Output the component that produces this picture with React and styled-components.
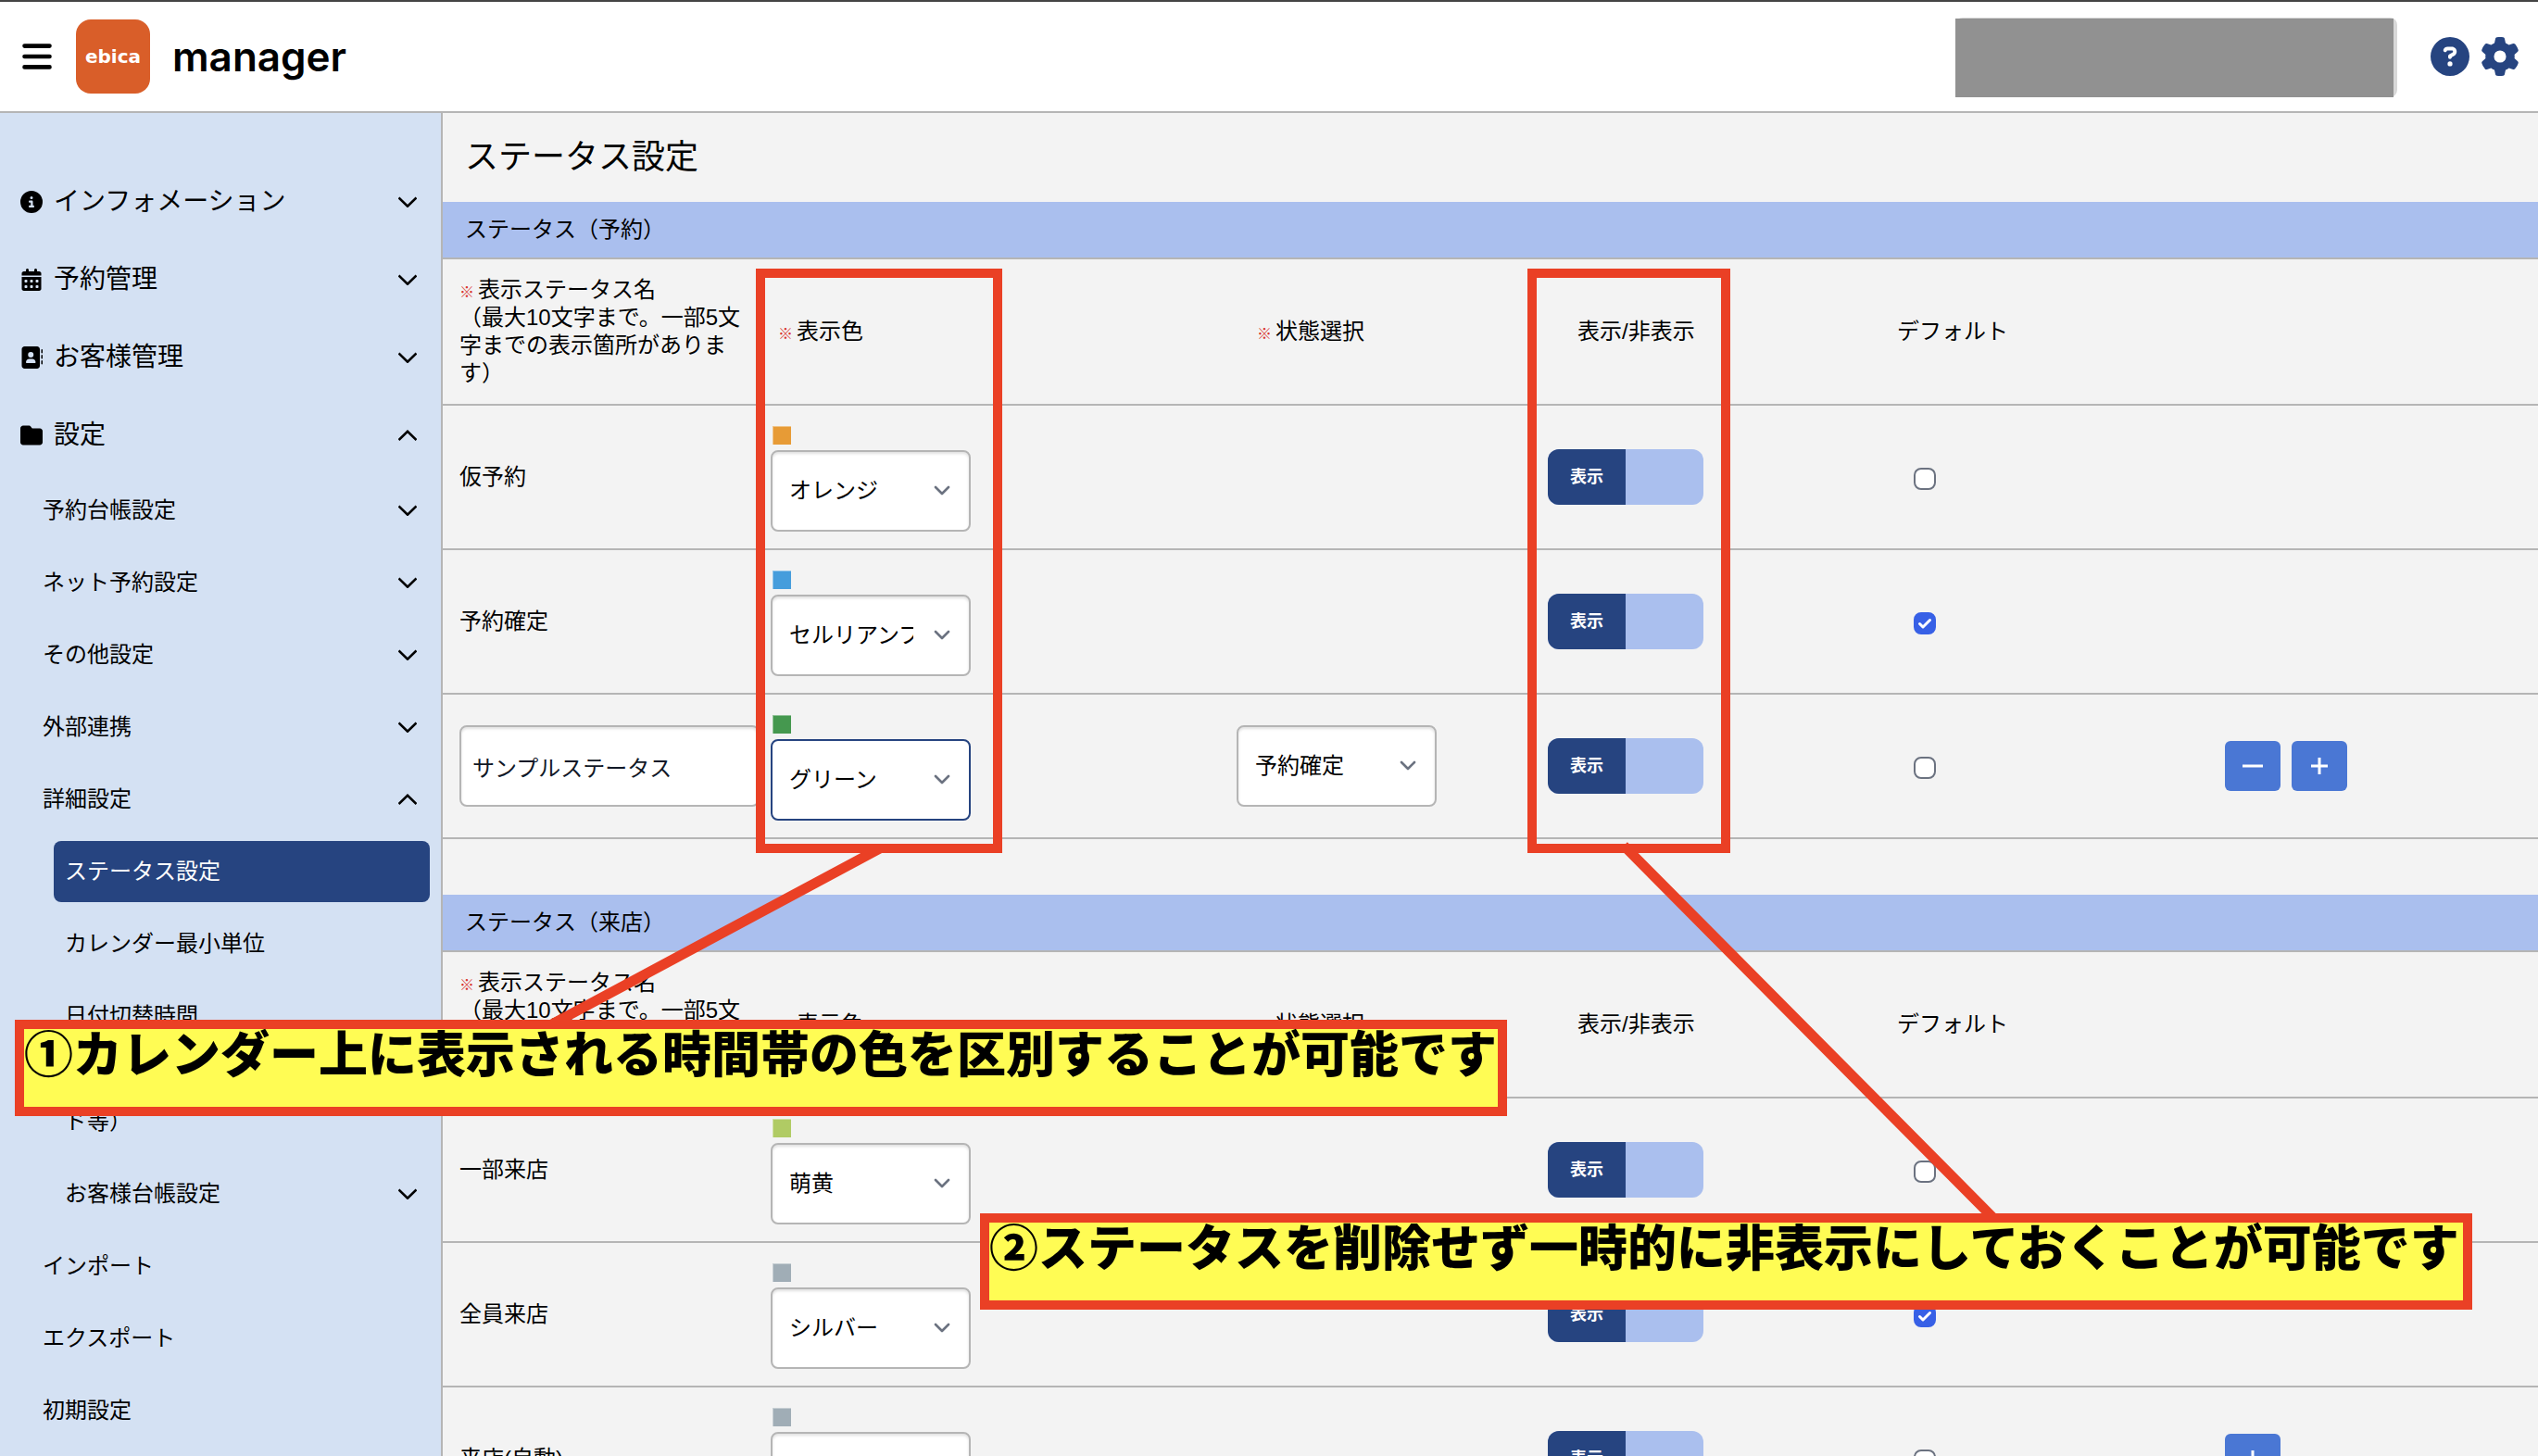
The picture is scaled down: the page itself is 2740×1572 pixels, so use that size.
import React, { useState } from "react";
import styled, { createGlobalStyle } from "styled-components";
import {
  FaAddressBook,
  FaCalendarDays,
  FaCircleInfo,
  FaCircleQuestion,
  FaFolder,
  FaGear,
} from "react-icons/fa6";

const color = {
  navy: "#264480",
  blue: "#4a77d4",
  band: "#aabfee",
  side: "#d4e1f3",
  page: "#f3f3f3",
  line: "#b5b5b5",
  red: "#ea4025",
  yellow: "#fffc54",
};

const GlobalStyle = createGlobalStyle`
  *, *::before, *::after { box-sizing: border-box; }
  body { margin: 0; background: ${color.page}; }
  body, button, input, select {
    font-family: "Liberation Sans", "Noto Sans CJK JP", sans-serif;
    font-size: 24px;
    line-height: 30px;
    color: #000;
  }
  button { border: 0; padding: 0; background: none; cursor: pointer; }
  a { color: inherit; text-decoration: none; }
  svg { display: block; flex: none; }
`;

const Screen = styled.div`
  position: relative;
  display: flex;
  flex-direction: column;
  height: 100vh;
  overflow: hidden;
`;

/* ---------- header ---------- */

const Header = styled.header`
  display: flex;
  align-items: center;
  flex: none;
  height: 122px;
  padding: 0 20px 0 24px;
  background: #fff;
  border-top: 2px solid #444;
  border-bottom: 2px solid ${color.line};
`;

const Logo = styled.span`
  display: grid;
  place-items: center;
  width: 80px;
  height: 80px;
  margin-left: 26px;
  border-radius: 16px;
  background: #d95e29;
  color: #fff;
  font: bold 20px/24px "DejaVu Sans", sans-serif;
`;

const Brand = styled.span`
  margin-left: 24px;
  font: 600 44px/56px Inter, sans-serif;
`;

const Account = styled.div`
  width: 477px;
  height: 86px;
  margin: 2px 0 0 auto;
  padding: 1px 4px 0 0;
  border-radius: 8px;
  background: #d8d8d8;
`;

const AccountMask = styled.div`
  height: 85px;
  background: #919191;
`;

const HeaderActions = styled.div`
  display: flex;
  gap: 12px;
  margin-left: 36px;
  color: ${color.navy};

  button { color: inherit; }
  svg { width: 42px; height: 42px; }
`;

/* ---------- side menu ---------- */

const Body = styled.div`
  display: flex;
  flex: 1;
  min-height: 0;
`;

const Side = styled.nav`
  display: flex;
  flex-direction: column;
  flex: none;
  width: 478px;
  padding-top: 54px;
  overflow: hidden;
  background: ${color.side};
  border-right: 2px solid ${color.line};
`;

const Group = styled.button`
  display: flex;
  align-items: center;
  flex: none;
  width: 100%;
  height: ${(p) => (p.$top ? 84 : 78)}px;
  padding: 0 26px 0 ${(p) => p.$indent}px;
  font-size: ${(p) => (p.$top ? 28 : 24)}px;
  text-align: left;

  > svg:first-child { width: 24px; height: 24px; margin-right: 12px; }
  > span { flex: 1; }
`;

const Leaf = styled.a`
  flex: none;
  margin: 6px 12px 6px ${(p) => (p.$deep ? 58 : 34)}px;
  padding: 15px 12px;
  border-radius: 8px;
  line-height: 36px;
  color: ${(p) => (p.$active ? "#fff" : "#000")};
  background: ${(p) => (p.$active ? color.navy : "transparent")};
`;

/* ---------- main ---------- */

const Main = styled.main`
  flex: 1;
  min-width: 0;
  overflow: hidden;
`;

const Title = styled.h1`
  margin: 0;
  padding: 21px 24px;
  font-size: 36px;
  font-weight: 400;
  line-height: 54px;
`;

const Section = styled.section`
  margin-bottom: 60px;
`;

const Band = styled.h2`
  margin: 0;
  padding: 15px 24px;
  font-size: 24px;
  font-weight: 400;
  line-height: 30px;
  background: ${color.band};
  border-bottom: 2px solid ${color.line};
`;

const Table = styled.table`
  width: 100%;
  table-layout: fixed;
  border-collapse: separate;
  border-spacing: 0;
`;

const HeadCell = styled.th`
  height: 158px;
  padding: 0 12px 0 ${(p) => p.$indent}px;
  border-bottom: 2px solid ${color.line};
  font-weight: 400;
  text-align: left;
`;

const Cell = styled.td`
  height: 156px;
  padding: 0 6px 0 ${(p) => p.$indent || 6}px;
  border-bottom: 2px solid ${color.line};
`;

const ColorCell = styled(Cell)`
  padding: 22px 6px 18px;
`;

const Required = styled.span`
  margin-right: 4px;
  color: #d9362f;
  font-size: 16px;
  line-height: 16px;
`;

const Swatch = styled.div`
  width: 20px;
  height: 20px;
  margin: 0 0 6px 2px;
  border: solid rgba(255, 255, 255, 0.4);
  border-width: 1px 0 0 1px;
  background: ${(p) => p.$color};
`;

const SelectBox = styled.div`
  position: relative;
  width: 216px;
  height: 88px;

  > svg {
    position: absolute;
    right: 22px;
    top: 38px;
    pointer-events: none;
  }
`;

const Select = styled.select`
  appearance: none;
  width: 100%;
  height: 100%;
  padding: 0 60px 0 18px;
  border: 2px solid ${(p) => (p.$focused ? color.navy : color.line)};
  border-radius: 8px;
  outline: 0;
  background: #fff;
  box-shadow: ${(p) => (p.$focused ? "none" : "inset 0 2px 3px rgba(0, 0, 0, 0.12)")};
`;

const TextBox = styled.input`
  display: block;
  width: 100%;
  height: 88px;
  padding: 0 12px;
  border: 2px solid ${color.line};
  border-radius: 8px;
  outline: 0;
  background: #fff;
  box-shadow: inset 0 2px 3px rgba(0, 0, 0, 0.12);
  color: #111827;
`;

const Switch = styled.button`
  display: flex;
  justify-content: ${(p) => (p.$on ? "flex-start" : "flex-end")};
  width: 168px;
  height: 60px;
  border-radius: 12px;
  overflow: hidden;
  background: ${color.band};

  > span {
    width: 84px;
    background: ${color.navy};
    color: #fff;
    font-size: 18px;
    font-weight: 700;
    line-height: 60px;
  }
`;

const Tick = styled.label`
  display: grid;
  width: 24px;
  height: 24px;
  margin-top: 4px;

  > * { grid-area: 1 / 1; }
  > svg { pointer-events: none; }
`;

const TickInput = styled.input`
  appearance: none;
  width: 24px;
  height: 24px;
  margin: 0;
  border: 2px solid #6b7280;
  border-radius: 8px;
  background: #fff;

  &:checked {
    border-color: #3760e6;
    background: #3760e6;
  }
`;

const Actions = styled.div`
  display: flex;
  gap: 12px;
`;

const ActionButton = styled.button`
  display: grid;
  place-items: center;
  width: 60px;
  height: 54px;
  border-radius: 6px;
  background: ${color.blue};
`;

/* ---------- annotations laid over the screen ---------- */

const Overlay = styled.div`
  position: absolute;
  inset: 0;
  pointer-events: none;
`;

const Lines = styled.svg`
  position: absolute;
  left: 0;
  top: 0;
`;

const Frame = styled.div`
  position: absolute;
  left: ${(p) => p.$x}px;
  top: 290px;
  width: ${(p) => p.$w}px;
  height: 631px;
  border: 10px solid ${color.red};
`;

const Callout = styled.p`
  position: absolute;
  left: ${(p) => p.$x}px;
  top: ${(p) => p.$y}px;
  min-width: 1611px;
  height: 104px;
  margin: 0;
  border: 10px solid ${color.red};
  background: ${color.yellow};
  font-size: 53px;
  font-weight: 900;
  line-height: 58px;
  white-space: nowrap;
`;

/* ---------- small drawings ---------- */

const Chevron = ({ up }) => (
  <svg width="20" height="12" viewBox="0 0 20 12" fill="none" stroke="#000" strokeWidth="2.6">
    <path d={up ? "M0.5 11L10 1.8L19.5 11" : "M0.5 1.5L10 10.7L19.5 1.5"} />
  </svg>
);

const Caret = () => (
  <svg width="18" height="12" viewBox="0 0 18 12" fill="none" stroke="#6b7280" strokeWidth="2.6" strokeLinecap="round" strokeLinejoin="round">
    <path d="M2 2L9 9L16 2" />
  </svg>
);

const Burger = () => (
  <svg width="32" height="28" viewBox="0 0 32 28" stroke="#000" strokeWidth="4.6" strokeLinecap="round">
    <path d="M2.5 2.6H29.5M2.5 14H29.5M2.5 25.4H29.5" />
  </svg>
);

const Check = () => (
  <svg width="24" height="24" viewBox="0 0 24 24" fill="none" stroke="#fff" strokeWidth="3" strokeLinecap="round" strokeLinejoin="round">
    <path d="M6.5 12.5L10 16L17.5 8.5" />
  </svg>
);

const Sign = ({ plus }) => (
  <svg width="22" height="20" viewBox="0 0 22 20" stroke="#fff" strokeWidth="3">
    <path d={plus ? "M2 10H20M11 1V19" : "M0 10H22"} />
  </svg>
);

/* ---------- data ---------- */

const topGroups = [
  { label: "インフォメーション", Icon: FaCircleInfo },
  { label: "予約管理", Icon: FaCalendarDays },
  { label: "お客様管理", Icon: FaAddressBook },
  { label: "設定", Icon: FaFolder, open: true },
];

const subGroups = [
  { label: "予約台帳設定" },
  { label: "ネット予約設定" },
  { label: "その他設定" },
  { label: "外部連携" },
  { label: "詳細設定", open: true },
];

const reservationRows = [
  { name: "仮予約", swatch: "#e79b36", colorName: "オレンジ" },
  { name: "予約確定", swatch: "#469ddc", colorName: "セルリアンブルー", checked: true },
  {
    name: "サンプルステータス",
    editable: true,
    swatch: "#45984f",
    colorName: "グリーン",
    focused: true,
    state: "予約確定",
    actions: ["minus", "plus"],
  },
];

const visitRows = [
  { name: "一部来店", swatch: "#b0cb64", colorName: "萌黄" },
  { name: "全員来店", swatch: "#a0adb6", colorName: "シルバー", checked: true },
  { name: "来店(自動)", swatch: "#a0adb6", colorName: "シルバー", actions: ["plus"] },
];

const columnWidths = [348, 503, 336, 377, 354, 344];

/* ---------- parts ---------- */

function Dropdown({ value, label, focused }) {
  return (
    <SelectBox>
      <Select aria-label={label} defaultValue={value} $focused={focused}>
        <option>{value}</option>
      </Select>
      <Caret />
    </SelectBox>
  );
}

function StatusRow({ row }) {
  const [on, setOn] = useState(true);
  const [checked, setChecked] = useState(Boolean(row.checked));
  return (
    <tr>
      <Cell $indent={18}>
        {row.editable ? <TextBox aria-label="表示ステータス名" defaultValue={row.name} /> : row.name}
      </Cell>
      <ColorCell>
        <Swatch $color={row.swatch} />
        <Dropdown value={row.colorName} label={`${row.name} 表示色`} focused={row.focused} />
      </ColorCell>
      <Cell>{row.state && <Dropdown value={row.state} label={`${row.name} 状態選択`} />}</Cell>
      <Cell>
        <Switch type="button" role="switch" aria-checked={on} $on={on} onClick={() => setOn(!on)}>
          <span>{on ? "表示" : "非表示"}</span>
        </Switch>
      </Cell>
      <Cell $indent={24}>
        <Tick>
          <TickInput
            type="checkbox"
            aria-label={`${row.name} デフォルト`}
            checked={checked}
            onChange={(e) => setChecked(e.target.checked)}
          />
          {checked && <Check />}
        </Tick>
      </Cell>
      <Cell>
        {row.actions && (
          <Actions>
            {row.actions.map((kind) => (
              <ActionButton key={kind} type="button" aria-label={kind === "plus" ? "追加" : "削除"}>
                <Sign plus={kind === "plus"} />
              </ActionButton>
            ))}
          </Actions>
        )}
      </Cell>
    </tr>
  );
}

function StatusSection({ title, rows }) {
  return (
    <Section>
      <Band>{title}</Band>
      <Table>
        <colgroup>
          {columnWidths.map((width, i) => (
            <col key={i} width={width} />
          ))}
        </colgroup>
        <thead>
          <tr>
            <HeadCell $indent={18}>
              <Required>※</Required>表示ステータス名
              <br />
              （最大10文字まで。一部5文字までの表示箇所があります）
            </HeadCell>
            <HeadCell $indent={14}><Required>※</Required>表示色</HeadCell>
            <HeadCell $indent={28}><Required>※</Required>状態選択</HeadCell>
            <HeadCell $indent={38}>表示/非表示</HeadCell>
            <HeadCell $indent={6}>デフォルト</HeadCell>
            <HeadCell $indent={6} />
          </tr>
        </thead>
        <tbody>
          {rows.map((row) => (
            <StatusRow key={row.name} row={row} />
          ))}
        </tbody>
      </Table>
    </Section>
  );
}

export default function App() {
  return (
    <Screen>
      <GlobalStyle />
      <Header>
        <button type="button" aria-label="メニュー"><Burger /></button>
        <Logo>ebica</Logo>
        <Brand>manager</Brand>
        <Account><AccountMask /></Account>
        <HeaderActions>
          <button type="button" aria-label="ヘルプ"><FaCircleQuestion /></button>
          <button type="button" aria-label="設定を開く"><FaGear /></button>
        </HeaderActions>
      </Header>

      <Body>
        <Side>
          {topGroups.map(({ label, Icon, open }) => (
            <Group key={label} type="button" aria-expanded={Boolean(open)} $top $indent={22}>
              <Icon />
              <span>{label}</span>
              <Chevron up={open} />
            </Group>
          ))}
          {subGroups.map(({ label, open }) => (
            <Group key={label} type="button" aria-expanded={Boolean(open)} $indent={46}>
              <span>{label}</span>
              <Chevron up={open} />
            </Group>
          ))}
          <Leaf href="#status" $deep $active>ステータス設定</Leaf>
          <Leaf href="#unit" $deep>カレンダー最小単位</Leaf>
          <Leaf href="#date" $deep>日付切替時間</Leaf>
          <Leaf href="#account" $deep>アカウントの各種設定（パスワード等）</Leaf>
          <Group type="button" aria-expanded={false} $indent={70}>
            <span>お客様台帳設定</span>
            <Chevron />
          </Group>
          <Leaf href="#import">インポート</Leaf>
          <Leaf href="#export">エクスポート</Leaf>
          <Leaf href="#initial">初期設定</Leaf>
        </Side>

        <Main>
          <Title>ステータス設定</Title>
          <StatusSection title="ステータス（予約）" rows={reservationRows} />
          <StatusSection title="ステータス（来店）" rows={visitRows} />
        </Main>
      </Body>

      <Overlay>
        <Lines width="2740" height="1572" stroke={color.red} strokeWidth="11">
          <path d="M950 916L590 1109M1753 913L2152 1315" />
        </Lines>
        <Frame $x={816} $w={266} />
        <Frame $x={1649} $w={219} />
        <Callout $x={16} $y={1101}>①カレンダー上に表示される時間帯の色を区別することが可能です</Callout>
        <Callout $x={1058} $y={1310}>②ステータスを削除せず一時的に非表示にしておくことが可能です</Callout>
      </Overlay>
    </Screen>
  );
}
